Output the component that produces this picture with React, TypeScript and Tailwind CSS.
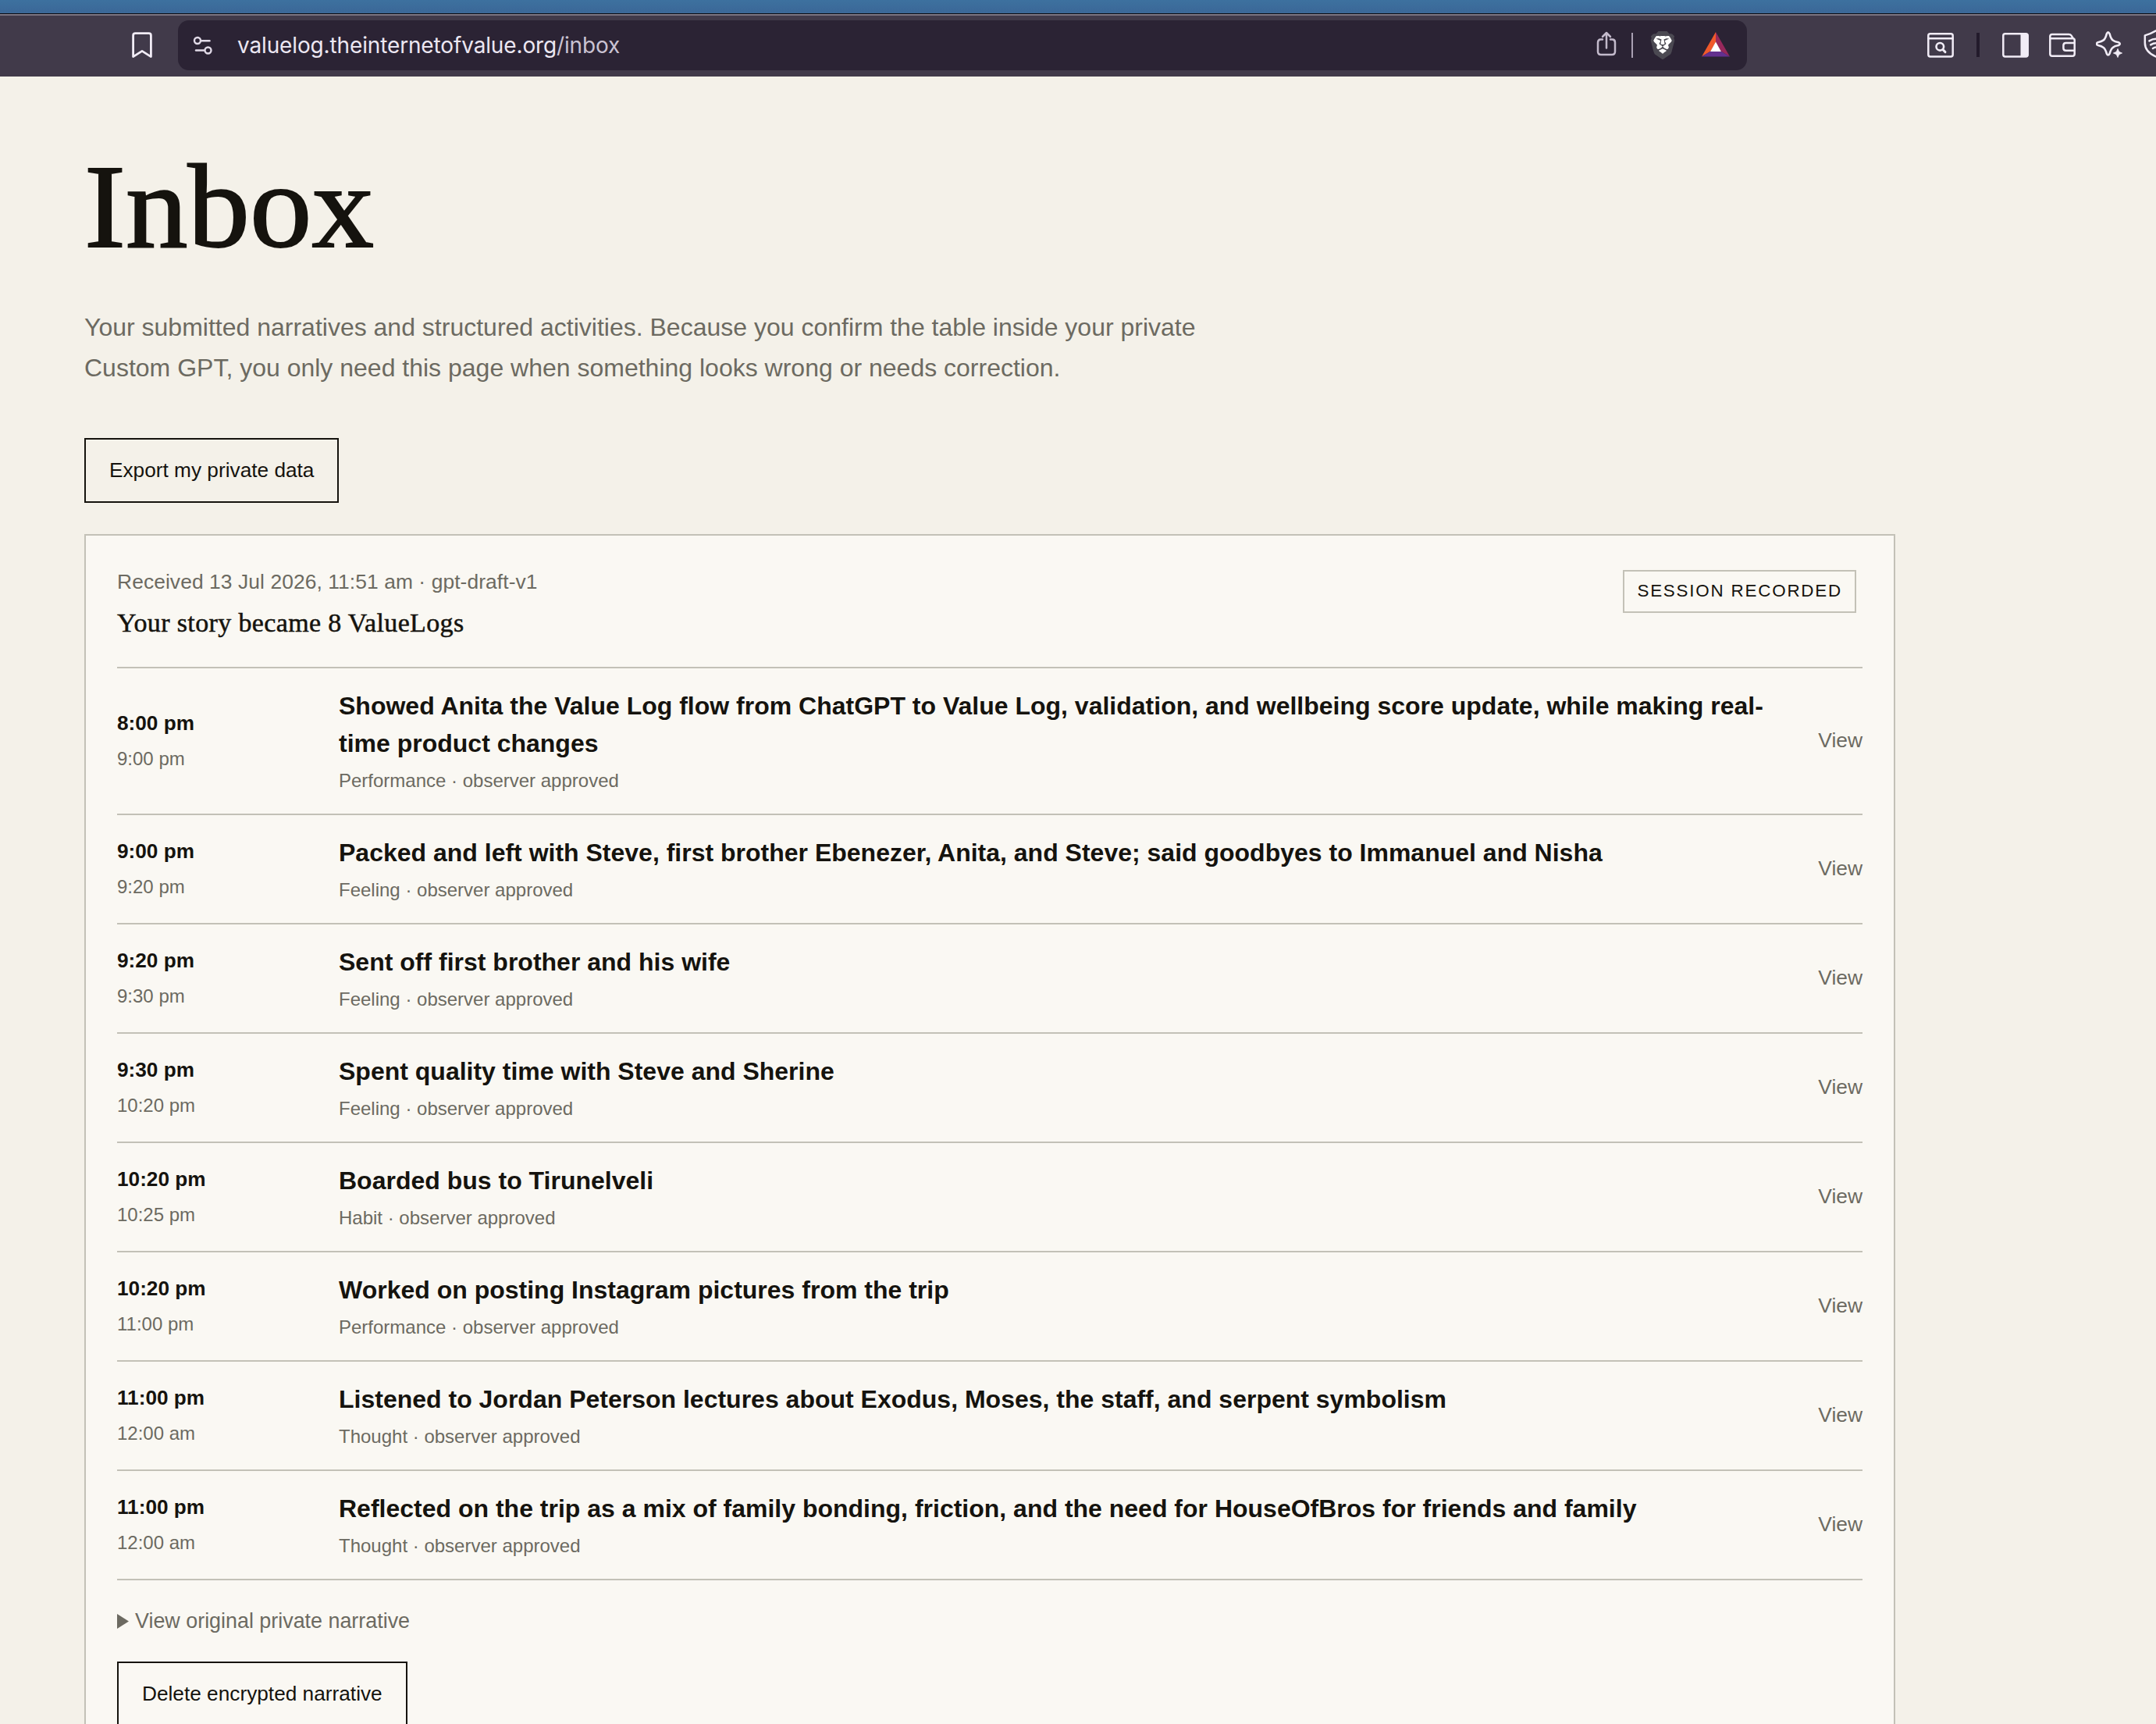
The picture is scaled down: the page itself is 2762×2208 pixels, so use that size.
import type { ReactNode } from "react";
import { SiBrave } from "react-icons/si";

type Entry = { start: string; end: string; title: ReactNode; kind: string };

const entries: Entry[] = [
  {
    start: "8:00 pm",
    end: "9:00 pm",
    title: (
      <>
        Showed Anita the Value Log flow from ChatGPT to Value Log, validation, and wellbeing score update, while making real-
        <br />
        time product changes
      </>
    ),
    kind: "Performance",
  },
  {
    start: "9:00 pm",
    end: "9:20 pm",
    title: "Packed and left with Steve, first brother Ebenezer, Anita, and Steve; said goodbyes to Immanuel and Nisha",
    kind: "Feeling",
  },
  { start: "9:20 pm", end: "9:30 pm", title: "Sent off first brother and his wife", kind: "Feeling" },
  { start: "9:30 pm", end: "10:20 pm", title: "Spent quality time with Steve and Sherine", kind: "Feeling" },
  { start: "10:20 pm", end: "10:25 pm", title: "Boarded bus to Tirunelveli", kind: "Habit" },
  { start: "10:20 pm", end: "11:00 pm", title: "Worked on posting Instagram pictures from the trip", kind: "Performance" },
  {
    start: "11:00 pm",
    end: "12:00 am",
    title: "Listened to Jordan Peterson lectures about Exodus, Moses, the staff, and serpent symbolism",
    kind: "Thought",
  },
  {
    start: "11:00 pm",
    end: "12:00 am",
    title: "Reflected on the trip as a mix of family bonding, friction, and the need for HouseOfBros for friends and family",
    kind: "Thought",
  },
];

function BookmarkIcon() {
  return (
    <svg viewBox="0 0 26 34" className="h-[34px] w-[26px] shrink-0" fill="none" stroke="#f1ecf6" strokeWidth="2.8" strokeLinejoin="round">
      <path d="M1.6 4.4Q1.6 1.6 4.4 1.6H21.6Q24.4 1.6 24.4 4.4V31.6L13 24.4L1.6 31.6Z" />
    </svg>
  );
}

function TuneIcon() {
  return (
    <svg viewBox="0 0 26 24" className="h-6 w-[26px] shrink-0" fill="none" stroke="#e2dbe8" strokeWidth="2.4" strokeLinecap="round">
      <circle cx="6" cy="6" r="4" />
      <path d="M11 6.3H21.5" />
      <circle cx="19.5" cy="18.5" r="4" />
      <path d="M4 18.5H14.5" />
    </svg>
  );
}

function ShareIcon() {
  return (
    <svg viewBox="0 0 26 32" className="h-8 w-[26px] shrink-0" fill="none" stroke="#c3bacb" strokeWidth="2.5" strokeLinecap="round" strokeLinejoin="round">
      <path d="M8 10.6H5.6Q2 10.6 2 14.4V26Q2 30 6 30H20Q24 30 24 26V14.4Q24 10.6 20.4 10.6H18" />
      <path d="M13 21.5V2.4M8 7L13 2L18 7" />
    </svg>
  );
}

function BraveIcon() {
  return (
    <span className="grid h-9 w-9 shrink-0 place-items-center">
      <svg viewBox="0 0 36 36" className="col-start-1 row-start-1 h-9 w-9" fill="#ffffff">
        <path d="M9 6H27L30 12L26 22L22 28L18 31L14 28L10 22L6 12Z" />
      </svg>
      <SiBrave className="col-start-1 row-start-1 h-9 w-9 text-[#4b4952]" />
    </span>
  );
}

function BatIcon() {
  return (
    <svg viewBox="0 0 36 32" className="h-8 w-9 shrink-0">
      <path d="M18 0L0 31.5L11.5 24.6L18 13Z" fill="#f0592b" />
      <path d="M18 0L36 31.5L24.5 24.6L18 13Z" fill="#98285c" />
      <path d="M0 31.5H36L24.5 24.6H11.5Z" fill="#63308f" />
      <path d="M18 12.6L24.9 25H11.1Z" fill="#ffffff" />
    </svg>
  );
}

function SearchTabsIcon() {
  return (
    <svg viewBox="0 0 34 32" className="h-8 w-[34px] shrink-0" fill="none" stroke="#f1ecf6" strokeWidth="2.5" strokeLinecap="round">
      <rect x="1.3" y="1.3" width="31.4" height="29.2" rx="2.4" />
      <path d="M1.2 7.3H32.8" />
      <circle cx="16.3" cy="17.8" r="4.8" strokeWidth="2.6" />
      <path d="M19.8 21.4L23 24.6" strokeWidth="2.9" />
    </svg>
  );
}

function SidebarIcon() {
  return (
    <svg viewBox="0 0 34 32" className="h-8 w-[34px] shrink-0">
      <rect x="1.3" y="1.3" width="31.4" height="29.2" rx="2.4" fill="none" stroke="#f1ecf6" strokeWidth="2.5" />
      <path d="M23.5 1H31Q33.6 1 33.6 4V28Q33.6 31 31 31H23.5Z" fill="#f1ecf6" />
    </svg>
  );
}

function WalletIcon() {
  return (
    <svg viewBox="0 0 34 32" className="h-8 w-[34px] shrink-0" fill="none" stroke="#f1ecf6" strokeWidth="2.5" strokeLinejoin="round">
      <path d="M1.3 7.3V27Q1.3 29.8 4 29.8H30Q32.7 29.8 32.7 27V9.6Q32.7 7.3 30.4 7.3H1.3V4.6Q1.3 1.9 4 1.9H25.4Q27.4 1.9 28.4 3.4L31 7.4" />
      <path d="M32.7 13H21.6Q18.4 13 18.4 16V19.8Q18.4 22.8 21.6 22.8H32.7" />
    </svg>
  );
}

function SparkleIcon() {
  return (
    <svg viewBox="0 0 34 34" className="h-[34px] w-[34px] shrink-0" fill="none" stroke="#f1ecf6" strokeWidth="2.6" strokeLinejoin="round">
      <path d="M13.8 3.4Q15.6 -0.6 17.6 3.4Q19.2 9.6 21.6 11.4Q23.8 13.2 29 14.2Q32.6 16 29 18Q23.8 19 21.6 20.9Q19.2 22.8 17.6 28.6Q15.6 32.4 13.8 28.6Q12.2 22.8 9.8 20.9Q7.4 19 2.6 18Q-0.8 16 2.6 14.2Q7.4 13.2 9.8 11.4Q12.2 9.6 13.8 3.4Z" />
      <path d="M28 22.4L29.7 26.3L33.6 28L29.7 29.7L28 33.6L26.3 29.7L22.4 28L26.3 26.3Z" fill="#f1ecf6" strokeWidth="0.8" />
    </svg>
  );
}

function VpnIcon() {
  return (
    <svg viewBox="0 0 32 36" className="h-9 w-8 shrink-0" fill="none" stroke="#f1ecf6" strokeWidth="2.5" strokeLinecap="round" strokeLinejoin="round">
      <path d="M16 1.4Q9 5.6 1.8 7.4V17Q1.8 28.6 16 34.6Q30.2 28.6 30.2 17V7.4Q23 5.6 16 1.4Z" />
      <path d="M7.4 14.4Q16 9.2 24.6 14.4M9.2 19.4Q16 15 22.8 19.4M12 24Q16 21.2 20 24" />
    </svg>
  );
}

function BrowserBar() {
  return (
    <header>
      <div className="h-[17px] bg-linear-to-b from-[#3d719f] to-[#3b6797]" />
      <div className="h-px bg-[#0b0b10]" />
      <div className="h-0.5 bg-[#7b7583]" />
      <div className="flex h-[78px] items-start bg-[#413a4a]">
        <div className="ml-[169px] mt-[21px]">
          <BookmarkIcon />
        </div>
        <div className="ml-[33px] mt-1.5 flex h-16 w-[2010px] shrink-0 items-center rounded-[14px] bg-[#2b2334] pl-[19px]">
          <TuneIcon />
          <span className="ml-[31px] font-['Inter',sans-serif] text-[28px] leading-[36px] tracking-[-0.14px] text-[#ece7f2]">
            valuelog.theinternetofvalue.org<span className="text-[#c9c2d2]">/inbox</span>
          </span>
          <div className="ml-auto mr-[22px] flex items-center">
            <div className="-mt-1">
              <ShareIcon />
            </div>
            <div className="ml-[19px] h-8 w-0.5 bg-[#a9a0b3]" />
            <div className="ml-5">
              <BraveIcon />
            </div>
            <div className="-mt-0.5 ml-8">
              <BatIcon />
            </div>
          </div>
        </div>
        <div className="ml-[231px] mt-[22px] flex">
          <SearchTabsIcon />
          <div className="ml-[29px] h-[31px] w-1 shrink-0 bg-[#231b2c]" />
          <div className="ml-[29px]">
            <SidebarIcon />
          </div>
          <div className="ml-[26px]">
            <WalletIcon />
          </div>
          <div className="-mt-0.5 ml-[26px]">
            <SparkleIcon />
          </div>
          <div className="-mt-1 ml-[27px]">
            <VpnIcon />
          </div>
        </div>
      </div>
    </header>
  );
}

function OutlineButton({ children }: { children: ReactNode }) {
  return (
    <button className="block h-[83px] border-2 border-[#15130e] px-[30px] pb-0.5 text-[26.24px] leading-[40px] text-[#15130e]">
      {children}
    </button>
  );
}

function EntryRow({ entry }: { entry: Entry }) {
  return (
    <li className="flex items-center border-b-2 border-[#c3c1b7] py-6">
      <div className="w-[284px] shrink-0">
        <div className="text-[26.2px] font-bold leading-[38px]">{entry.start}</div>
        <div className="mt-2 text-[24px] leading-[38px] text-[#6c6a61]">{entry.end}</div>
      </div>
      <div className="grow">
        <div className="whitespace-nowrap text-[32px] font-bold leading-[48px]">{entry.title}</div>
        <div className="mt-[5px] text-[24px] leading-[37px] text-[#6c6a61]">{entry.kind} · observer approved</div>
      </div>
      <a className="pb-[3px] text-[26.4px] leading-[40px] text-[#6c6a61]">View</a>
    </li>
  );
}

export default function App() {
  return (
    <div className="h-[2208px] w-[2762px] overflow-hidden bg-[#f4f1e9] font-['Liberation_Sans',Arial,sans-serif] text-[#15130e]">
      <BrowserBar />
      <main className="ml-[108px] w-[2320px] pt-[90px]">
        <h1 className="origin-left scale-x-[1.039] font-['Liberation_Serif',serif] text-[153px] leading-[153px] [-webkit-text-stroke:2px_#15130e]">
          Inbox
        </h1>
        <p className="mt-[52px] text-[32px] leading-[52px] text-[#6c6a61]">
          Your submitted narratives and structured activities. Because you confirm the table inside your private
          <br />
          Custom GPT, you only need this page when something looks wrong or needs correction.
        </p>
        <div className="mt-16">
          <OutlineButton>Export my private data</OutlineButton>
        </div>
        <section className="mt-10 h-[1600px] border-2 border-[#c3c1b7] bg-[#faf8f3] px-10 pt-[39px]">
          <div className="flex h-[129px] items-start justify-between">
            <div>
              <div className="text-[26.4px] leading-[40px] tracking-[0.08px] text-[#6c6a61]">Received 13 Jul 2026, 11:51 am · gpt-draft-v1</div>
              <h2 className="mt-2 font-['Liberation_Serif',serif] text-[34px] leading-[50px] tracking-[0.36px] [-webkit-text-stroke:0.5px_#15130e]">
                Your story became 8 ValueLogs
              </h2>
            </div>
            <span className="mr-2 mt-[5px] flex h-[55px] items-center border-2 border-[#c3c1b7] px-4 pb-0.5 text-[22.4px] tracking-[0.08em]">
              SESSION RECORDED
            </span>
          </div>
          <ul className="border-t-2 border-[#c3c1b7]">
            {entries.map((entry, i) => (
              <EntryRow key={i} entry={entry} />
            ))}
          </ul>
          <div className="mt-8 flex items-center text-[26.88px] leading-[40px] text-[#6c6a61]">
            <svg viewBox="0 0 15 19" className="mr-2 h-[19px] w-[15px]" fill="#6c6a61">
              <path d="M0 0L15 9.5L0 19Z" />
            </svg>
            View original private narrative
          </div>
          <div className="mt-8">
            <OutlineButton>Delete encrypted narrative</OutlineButton>
          </div>
        </section>
      </main>
    </div>
  );
}
